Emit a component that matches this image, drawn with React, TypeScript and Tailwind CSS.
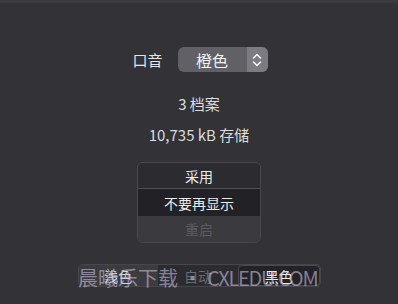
import React from "react";

const font = { fontFamily: '"Noto Sans CJK SC", "Noto Sans", sans-serif' };

export default function App() {
  return (
    <div
      className="relative w-[398px] h-[304px] overflow-hidden bg-[#323237] text-[#e6e6e8]"
      style={font}
    >
      <div className="h-[3px] bg-[#3a3a3f]" />
      <div className="flex flex-col items-center">
        <div className="mt-[44px] flex items-center gap-[15px] pl-[2px]">
          <span className="text-[15px] leading-none text-[#e4e4e6]">口音</span>
          <div className="flex h-[25px] w-[90px] overflow-hidden rounded-[6px] bg-[#606066]">
            <div className="flex flex-1 items-center justify-center text-[16px] leading-none text-[#f2f2f4]">
              橙色
            </div>
            <div className="flex w-[21px] items-center justify-center bg-[#7b7b81]">
              <svg width="10" height="14" viewBox="0 0 10 14" fill="none" stroke="#f4f4f6" strokeWidth="1.6" strokeLinecap="round" strokeLinejoin="round">
                <path d="M1.5 5 L5 1.5 L8.5 5" />
                <path d="M1.5 9 L5 12.5 L8.5 9" />
              </svg>
            </div>
          </div>
        </div>
        <div className="mt-[24px] text-[15px] leading-none text-[#dcdcde]">3 档案</div>
        <div className="mt-[16px] text-[15px] leading-none text-[#dcdcde]">10,735 kB 存储</div>
        <div className="mt-[20px] flex w-[124px] flex-col overflow-hidden rounded-[6px] border border-[#48484d] text-[14px] leading-none">
          <div className="flex h-[25px] items-center justify-center bg-[#2b2b30] text-[#ececee]">采用</div>
          <div className="h-px bg-[#4e4e53]" />
          <div className="flex h-[27px] items-center justify-center bg-[#222226] text-[#ececee]">不要再显示</div>
          <div className="flex h-[26px] items-center justify-center bg-[#3a3a3f] text-[#5c5c62]">重启</div>
        </div>
        <div className="mt-[21px] flex h-[23px] w-[243px] overflow-hidden rounded-[5px] border border-[#46464b] text-[14px] leading-none">
          <div className="flex flex-1 items-center justify-center bg-[#3b3b40] text-[#d8d8dc]">浅色</div>
          <div className="flex flex-1 items-center justify-center bg-[#2c2c30] text-[#6a6a70]">自动</div>
          <div className="flex flex-1 items-center justify-center rounded-[4px] border border-[#4a4a50] bg-[#232327] text-[#f0f0f2]">黑色</div>
        </div>
      </div>
      <div className="absolute left-[78px] top-[268px] whitespace-nowrap text-[20px] leading-none text-[#c8c0dc]/60">
        晨曦乐下载 • <span className="tracking-[-1.3px]">CXLEDU.COM</span>
      </div>
    </div>
  );
}
